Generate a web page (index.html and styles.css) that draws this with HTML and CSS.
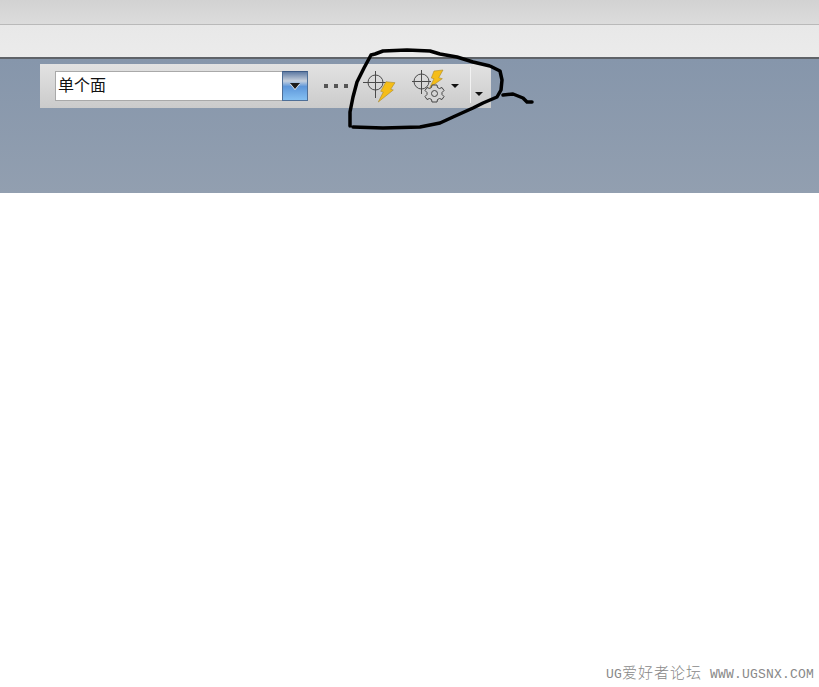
FILE: index.html
```html
<!DOCTYPE html>
<html lang="zh-CN">
<head>
    <meta charset="UTF-8">
    <meta name="viewport" content="width=device-width, initial-scale=1.0">
    <title>UG</title>
    <link rel="stylesheet" href="styles.css">
</head>
<body>
    <main class="page">
        <div class="title-bar"></div>
        <div class="menu-bar"></div>

        <section class="work-band">
            <div class="toolbar">
                <div class="select-box">
                    <span class="select-text">单个面</span>
                    <span class="select-btn"><span class="arrow"></span></span>
                </div>

                <div class="grip">
                    <span></span><span></span><span></span>
                </div>

                <svg class="snap-icon" width="34" height="34" viewBox="0 0 34 34">
                    <g fill="none" stroke="#4a4a4a" stroke-width="1">
                        <circle cx="13.500" cy="13.500" r="7.500"/>
                        <path d="M1 13.500H25M13.500 2V29"/>
                    </g>
                    <path d="M24 12.700L33 13.700L28.700 20.300L31.300 21L16.300 33L21.300 23L18.700 22.300Z" fill="#f5bd17" stroke="#a98a2c" stroke-width=".6"/>
                </svg>

                <svg class="snap-gear-icon" width="40" height="40" viewBox="0 0 40 40">
                    <g fill="none" stroke="#4a4a4a" stroke-width="1">
                        <circle cx="13.500" cy="15.500" r="7.500"/>
                        <path d="M4 15.500H23M13.500 4V28"/>
                    </g>
                    <path d="M26 5L35 4L30.700 11.700L34.300 12.700L21.700 21.700L26 12.700L23.300 12Z" fill="#f5bd17" stroke="#a98a2c" stroke-width=".6"/>
                    <g fill="#d4d4d4" stroke="#444" stroke-width="1" transform="translate(3.500 5)">
                        <path d="M20.500 14H25.500L26 16.500L28 17.500L30.500 16.500L32.500 19.500L30.500 21.500V23.500L32.500 25.500L30.500 28.500L28 27.500L26 28.500L25.500 31H20.500L20 28.500L18 27.500L15.500 28.500L13.500 25.500L15.500 23.500V21.500L13.500 19.500L15.500 16.500L18 17.500L20 16.500Z"/>
                        <circle cx="23" cy="22.500" r="3"/>
                    </g>
                </svg>
                <span class="mini-arrow gear-arrow"></span>

                <span class="divider"></span>
                <span class="mini-arrow end-arrow"></span>
            </div>
        </section>

        <p class="watermark">UG<span class="watermark-cn">爱好者论坛</span> WWW.UGSNX.COM</p>

        <!-- pen marks drawn over the screenshot -->
        <svg class="pen-mark" width="819" height="687" viewBox="0 0 819 687">
            <path d="M350 126L350 112L353 97L357 82L364 68L371 55L375 54L383 51L407 50L430 51L440 54L457 57L473 62L490 66L500 71L502 80L501 90L497 97L483 103L473 108L453 117L440 123L420 127L383 128L353 127"/>
            <path d="M503 95L513 94L523 98L527 102L532 102"/>
        </svg>
    </main>
</body>
</html>
```

FILE: styles.css
```css
*{
    padding: 0;
    margin: 0;
    box-sizing: border-box;
}
body{
    background: white;
    font-family: "Noto Sans CJK SC", "Liberation Sans", sans-serif;
}
.page{
    position: relative;
    display: flex;
    flex-direction: column;
    height: 687px;
    overflow: hidden;
}

.title-bar{
    height: 25px;
    background: linear-gradient(to bottom, #d2d2d2, #dcdcdc);
    border-bottom: 1px solid #b9b9b9;
}
.menu-bar{
    height: 34px;
    background: linear-gradient(to bottom, #e8e8e8, #ebebeb);
    border-bottom: 2px solid #5f6368;
}

.work-band{
    height: 134px;
    padding: 5px 0 0 40px;
    background: linear-gradient(to bottom, #8696ab, #929fb0);
}

.toolbar{
    display: flex;
    align-items: center;
    width: 451px;
    height: 44px;
    padding-left: 15px;
    background: linear-gradient(to bottom, #e2e2e2, #cbcbcb);
}

.select-box{
    display: flex;
    width: 253px;
    height: 30px;
    background: white;
    border: 1px solid #a9a9a9;
    border-right: none;
}
.select-text{
    flex: 1;
    padding-left: 2px;
    font-size: 16px;
    line-height: 25px;
    color: #111;
}
.select-btn{
    display: flex;
    align-items: center;
    justify-content: center;
    width: 26px;
    margin: -1px 0;
    background: linear-gradient(to bottom, #5f7ba3 0, #c6d0dd 32%, #5e97da 52%, #85c0f2 100%);
    border: 1px solid #4f6f97;
    border-top-color: #3c5a85;
}
.arrow{
    width: 0;
    height: 0;
    border-left: 5px solid transparent;
    border-right: 5px solid transparent;
    border-top: 6px solid #1c1c1c;
    filter: drop-shadow(0 1px 0 white);
}

.grip{
    display: flex;
    gap: 6px;
    margin-left: 16px;
}
.grip span{
    width: 4px;
    height: 4px;
    background: #555;
}

.snap-icon{
    margin-left: 14px;
}
.snap-gear-icon{
    margin-left: 12px;
}

.mini-arrow{
    width: 0;
    height: 0;
    border-left: 4px solid transparent;
    border-right: 4px solid transparent;
    border-top: 4px solid #111;
}
.gear-arrow{
    margin-left: 3px;
}
.divider{
    width: 1px;
    height: 36px;
    margin: -3px 0 0 11px;
    background: #f2f2f2;
}
.end-arrow{
    margin: 16px 0 0 4px;
}

.watermark{
    margin-top: auto;
    padding: 0 5px 3px 0;
    text-align: right;
    font-family: "Liberation Mono", monospace;
    font-size: 13px;
    letter-spacing: .2px;
    line-height: 18px;
    color: #888;
}
.watermark-cn{
    font-family: "Noto Sans CJK SC", sans-serif;
    font-size: 15px;
    letter-spacing: 1px;
    font-weight: 300;
}

.pen-mark{
    position: absolute;
    top: 0;
    left: 0;
}
.pen-mark path{
    fill: none;
    stroke: black;
    stroke-width: 3.5;
    stroke-linejoin: round;
    stroke-linecap: round;
}
```
